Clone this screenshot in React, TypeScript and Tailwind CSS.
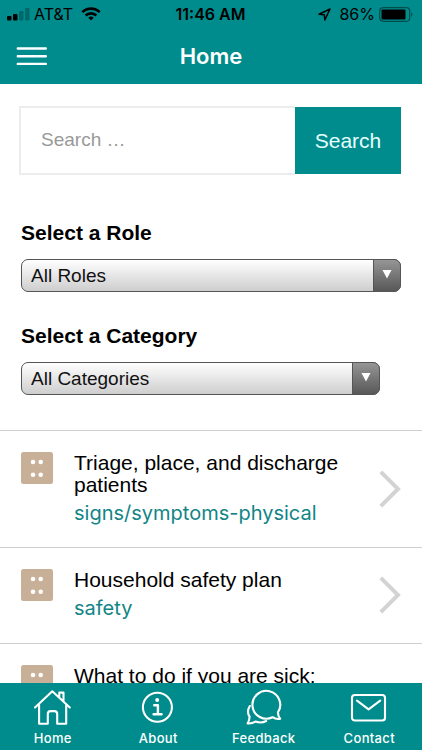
import { type ReactNode } from 'react';

interface Topic {
    title: string;
    tag?: string;
}

const topics: Topic[] = [
    { title: 'Triage, place, and discharge patients', tag: 'signs/symptoms-physical' },
    { title: 'Household safety plan', tag: 'safety' },
    { title: 'What to do if you are sick:' },
];

const StatusBar = () => (
    <div className="grid grid-cols-3 items-center h-7 pl-[7px] pr-2 text-base text-black">
        <div className="flex items-center">
            <svg width="23" height="14" viewBox="0 0 23 14">
                <rect x="0" y="9" width="4.5" height="4.5" rx="1" />
                <rect x="6" y="7" width="4.5" height="6.5" rx="1" />
                <rect x="12" y="4" width="4.5" height="9.5" rx="1" opacity="0.25" />
                <rect x="18" y="1" width="4.5" height="12.5" rx="1" opacity="0.25" />
            </svg>
            <span className="ml-1">AT&amp;T</span>
            <svg className="ml-2" width="20" height="14" viewBox="0 0 20 14" fill="none" stroke="black" strokeWidth="2.6">
                <path d="M1.3 5.1a12.6 12.6 0 0 1 17.4 0" />
                <path d="M4.6 8.5a7.8 7.8 0 0 1 10.8 0" />
                <path d="M7.3 10.7a4 4 0 0 1 5.4 0L10 13.6z" fill="black" stroke="none" />
            </svg>
        </div>
        <span className="text-center font-semibold whitespace-nowrap">11:46 AM</span>
        <div className="flex items-center justify-end">
            <svg width="13" height="13" viewBox="0 0 13 13" fill="none" stroke="black" strokeWidth="1.5" strokeLinejoin="round">
                <path d="M12 1 1 6.2l5.3.5.5 5.3z" />
            </svg>
            <span className="ml-2">86%</span>
            <svg className="ml-1" width="35" height="15" viewBox="0 0 35 15">
                <rect x="0.7" y="0.7" width="30" height="13.6" rx="3.5" fill="none" stroke="black" strokeWidth="1.2" opacity="0.45" />
                <rect x="2.5" y="2.5" width="24" height="10" rx="1" />
                <path d="M32.3 5a3.4 3.4 0 0 1 0 5z" opacity="0.5" />
            </svg>
        </div>
    </div>
);

const Header = () => (
    <header className="bg-[#008c8c] font-[Inter,sans-serif]">
        <StatusBar />
        <div className="grid grid-cols-3 items-center h-14 px-4 text-white">
            <button type="button" aria-label="Menu" className="w-8">
                <svg width="32" height="20" viewBox="0 0 32 20" stroke="white" strokeWidth="2.4" strokeLinecap="round">
                    <path d="M1.8 2.5h28M1.8 10.2h28M1.8 17.9h28" />
                </svg>
            </button>
            <h1 className="text-center text-[22px] font-semibold">Home</h1>
        </div>
    </header>
);

interface SelectFieldProps {
    id: string;
    label: string;
    option: string;
    className: string;
}

const SelectField = ({ id, label, option, className }: SelectFieldProps) => (
    <div className="flex flex-col gap-3">
        <label htmlFor={id} className="text-[21px] leading-7 font-bold">{label}</label>
        <div className={`relative ${className}`}>
            <select
                id={id}
                className="block w-full h-[33px] pl-[9px] pr-8 appearance-none rounded-[7px] border border-[#555] bg-linear-to-b from-white to-[#cecece] text-[19px] leading-7 text-[#111]"
            >
                <option>{option}</option>
            </select>
            <span className="absolute inset-y-0 right-0 flex items-center justify-center w-7 pb-0.5 rounded-r-[7px] border border-[#555] bg-linear-to-b from-[#969696] to-[#585858] pointer-events-none">
                <svg width="10" height="9" viewBox="0 0 10 9" fill="white">
                    <path d="M0.5 0h9L5 8.5z" />
                </svg>
            </span>
        </div>
    </div>
);

const TopicRow = ({ title, tag }: Topic) => (
    <li className="min-h-24 border-t border-[#cfcfcf]">
        <a href="#" className="flex items-center gap-[21px] py-[21px] px-[21px]">
            <svg className="self-start shrink-0" width="32" height="32" viewBox="0 0 32 32">
                <rect width="32" height="32" rx="2.5" fill="#c7b097" />
                <g fill="white">
                    <circle cx="12" cy="10" r="2.3" />
                    <circle cx="19.7" cy="10" r="2.3" />
                    <circle cx="12" cy="22.7" r="2.3" />
                    <circle cx="19.7" cy="22.7" r="2.3" />
                </g>
            </svg>
            <div className="flex-1 self-start">
                <h2 className="text-[21px] leading-[22px]">{title}</h2>
                {tag && (
                    <p className="mt-1 font-[Inter,sans-serif] text-xl leading-[26px] text-[#118585]">{tag}</p>
                )}
            </div>
            {tag && (
                <svg className="shrink-0" width="22" height="38" viewBox="0 0 22 38" fill="none" stroke="#d3d3d3" strokeWidth="4">
                    <path d="M1.8 1.8 19 19 1.8 36.2" />
                </svg>
            )}
        </a>
    </li>
);

const TabItem = ({ label, children }: { label: string; children: ReactNode }) => (
    <a href="#" className="flex-1 flex flex-col items-center pt-1 pb-1">
        <svg width="40" height="40" viewBox="0 0 40 40" fill="none" stroke="white" strokeWidth="2.1" strokeLinecap="round" strokeLinejoin="round">
            {children}
        </svg>
        <span className="mt-[3px] text-[13px] leading-4 font-medium tracking-wide">{label}</span>
    </a>
);

const TabBar = () => (
    <nav className="flex bg-[#008c8c] text-white font-[Inter,sans-serif]">
        <TabItem label="Home">
            <path d="M2 20.5 19.3 4.3l17.5 16.2M6.1 17.5v19.3h8.7V27c0-1.9 1-2.9 2.8-2.9h3.8c1.8 0 2.8 1 2.8 2.9v9.8h9V17.5M26.3 9.5V5.6h4.2v8.3" />
        </TabItem>
        <TabItem label="About">
            <circle cx="19.4" cy="20.3" r="14.5" />
            <circle cx="19.2" cy="13" r="2" fill="white" stroke="none" />
            <path d="M16.2 18.3h3.7v8.7M15.6 27.2h8" strokeWidth="2.4" />
        </TabItem>
        <TabItem label="Feedback">
            <path d="M34 25.3A13.9 13.9 0 1 0 28.5 30.2c2.3 1.5 4.8 2.1 7.7 1.6-1.6-1.8-2.3-3.8-2.2-6.5" />
            <path d="M5.8 19c-2.4 3.9-2.4 7.3-.2 10.6 0 2.7-.6 4.8-2 6.9 3 .2 5.6-.4 7.8-1.9 3.9 1.3 7.5 1.1 10.8-.6" />
        </TabItem>
        <TabItem label="Contact">
            <rect x="3" y="8" width="33" height="25.5" rx="2.8" />
            <path d="M8 13.7 19.6 22.3 31.2 13.7" />
        </TabItem>
    </nav>
);

const App = () => {
    return (
        <div className="flex flex-col h-dvh bg-white text-black font-['Liberation_Sans',Arial,sans-serif]">
            <Header />
            <main className="flex-1 min-h-0 overflow-y-auto [scrollbar-width:none]">
                <form className="flex ml-[19px] mr-[21px] mt-[22px]">
                    <input
                        type="search"
                        aria-label="Search"
                        placeholder="Search …"
                        className="flex-1 min-w-0 h-[69px] px-5 pb-0.5 border-2 border-r-0 border-[#ececec] text-[19px] placeholder:text-[#999]"
                    />
                    <button type="submit" className="my-px w-[106px] bg-[#008c8c] text-[21px] text-[#e6ffff]">Search</button>
                </form>
                <div className="flex flex-col gap-[30px] mt-11 mb-[35px] px-[21px]">
                    <SelectField id="role" label="Select a Role" option="All Roles" className="w-full" />
                    <SelectField id="category" label="Select a Category" option="All Categories" className="w-[94.5%]" />
                </div>
                <ul>
                    {topics.map((topic) => (
                        <TopicRow key={topic.title} {...topic} />
                    ))}
                </ul>
            </main>
            <TabBar />
        </div>
    );
};

export default App;
